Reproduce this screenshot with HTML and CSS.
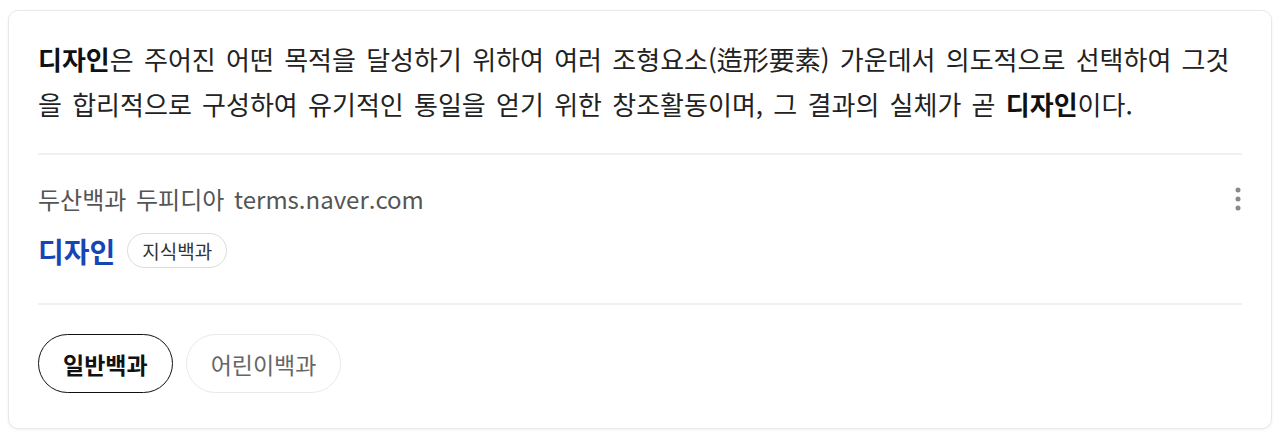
FILE: index.html
```html
<!DOCTYPE html>
<html lang="ko">
<head>
<meta charset="utf-8">
<title>디자인</title>
<link rel="stylesheet" href="styles.css">
</head>
<body>
<div class="card">
  <p class="desc"><strong>디자인</strong>은 주어진 어떤 목적을 달성하기 위하여 여러 조형요소(造形要素) 가운데서 의도적으로 선택하여 그것을 합리적으로 구성하여 유기적인 통일을 얻기 위한 창조활동이며, 그 결과의 실체가 곧 <strong>디자인</strong>이다.</p>
  <div class="divider"></div>
  <div class="source">
    <div class="source-main">
      <div class="source-line">두산백과 두피디아 terms.naver.com</div>
      <div class="title-row">
        <span class="title">디자인</span>
        <span class="tag">지식백과</span>
      </div>
    </div>
    <button class="more" aria-label="더보기">
      <svg width="8" height="24" viewBox="0 0 8 24"><circle cx="4" cy="3" r="2.5" fill="#8a8a8a"/><circle cx="4" cy="12" r="2.5" fill="#8a8a8a"/><circle cx="4" cy="21" r="2.5" fill="#8a8a8a"/></svg>
    </button>
  </div>
  <div class="divider"></div>
  <div class="tabs">
    <span class="tab active">일반백과</span>
    <span class="tab">어린이백과</span>
  </div>
</div>
</body>
</html>
```
FILE: styles.css
```css
* { box-sizing: border-box; }
body {
  margin: 0;
  padding: 10px 8px 12px;
  background: #fff;
  font-family: "Noto Sans CJK KR", "Noto Sans", sans-serif;
  color: #222;
}
.card {
  border: 1px solid #e6e8ec;
  border-radius: 10px;
  box-shadow: 0 1px 3px rgba(0,0,0,0.06);
  padding: 25px 29px 35px;
  background: #fff;
}
.desc {
  margin: 0;
  font-size: 26px;
  line-height: 45px;
  color: #222;
  word-spacing: 3px;
}
.desc strong { font-weight: 700; color: #111; }
.divider {
  height: 2px;
  background: #f0f1f3;
  margin-top: 27px;
}
.source + .divider { margin-top: 0; }
.source {
  display: flex;
  justify-content: space-between;
  align-items: flex-start;
  padding: 29px 0 35px;
}
.source-line {
  font-size: 24px;
  line-height: 30px;
  color: #555;
  word-spacing: 3px;
}
.title-row {
  display: flex;
  align-items: center;
  gap: 12px;
  margin-top: 19px;
}
.title {
  font-size: 28px;
  font-weight: 700;
  color: #1746b4;
  line-height: 34px;
}
.tag {
  font-size: 19px;
  line-height: 24px;
  color: #333;
  border: 1.5px solid #dcdcdc;
  border-radius: 18px;
  padding: 4.5px 14px;
}
.more {
  border: 0;
  background: none;
  padding: 0;
  margin-top: 3px;
  margin-right: -6px;
  width: 20px;
  display: flex;
  justify-content: center;
}
.tabs {
  display: flex;
  gap: 13px;
  padding-top: 29px;
}
.tab {
  font-size: 23px;
  line-height: 30px;
  padding: 13.5px 24px;
  border: 1.5px solid #e8e9ec;
  border-radius: 30px;
  color: #666;
}
.tab.active {
  border-color: #111;
  color: #111;
  font-weight: 700;
}
```
